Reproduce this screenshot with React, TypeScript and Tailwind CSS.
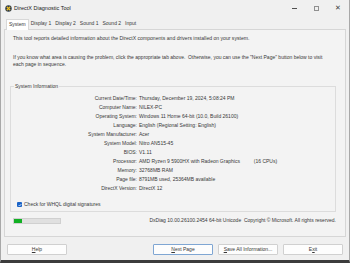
import React from "react";

export default function App() {
  const rows = [
    ["Current Date/Time:", "Thursday, December 19, 2024, 5:08:24 PM"],
    ["Computer Name:", "NILEX-PC"],
    ["Operating System:", "Windows 11 Home 64-bit (10.0, Build 26100)"],
    ["Language:", "English (Regional Setting: English)"],
    ["System Manufacturer:", "Acer"],
    ["System Model:", "Nitro AN515-45"],
    ["BIOS:", "V1.11"],
    ["Processor:", "AMD Ryzen 9 5900HX with Radeon Graphics          (16 CPUs)"],
    ["Memory:", "32768MB RAM"],
    ["Page file:", "8791MB used, 25364MB available"],
    ["DirectX Version:", "DirectX 12"],
  ];

  const tabs = ["System", "Display 1", "Display 2", "Sound 1", "Sound 2", "Input"];

  return (
    <div className="w-[350px] h-[263px] bg-[#f0f0f0] flex flex-col font-['Liberation_Sans',Arial,sans-serif] text-[5px] text-[#383838] border-x border-[#a8a8a8] border-b-[3px] border-b-[#3c3c3c] overflow-hidden">
      {/* Title bar */}
      <div className="h-[17px] flex items-center pl-[4px] shrink-0">
        <svg width="7" height="7" viewBox="0 0 10 10" className="mr-[2px]">
          <circle cx="5" cy="5" r="4.6" fill="#2d3a4a" />
          <path d="M2.5 2.5 L7.5 7.5 M7.5 2.5 L2.5 7.5" stroke="#f0c020" strokeWidth="1.6" />
        </svg>
        <span className="text-[5.5px] text-[#202020]">DirectX Diagnostic Tool</span>
        <div className="ml-auto flex items-center h-full text-[#404040]">
          <div className="w-[22px] flex justify-center">
            <div className="w-[5px] h-px bg-[#505050]" />
          </div>
          <div className="w-[22px] flex justify-center">
            <div className="w-[5px] h-[5px] border border-[#909090]" />
          </div>
          <div className="w-[22px] flex justify-center text-[7px]">✕</div>
        </div>
      </div>

      {/* Tabs */}
      <div className="h-[12px] flex items-end pl-[5px] shrink-0">
        {tabs.map((t, i) => (
          <div
            key={t}
            className={
              i === 0
                ? "h-[11px] px-[2px] flex items-center bg-white border border-b-0 border-[#d8d8d8] relative top-px"
                : "h-[10px] px-[2px] flex items-center"
            }
          >
            {t}
          </div>
        ))}
      </div>

      {/* Panel */}
      <div className="mx-[3px] h-[208px] border border-[#d6d6d6] bg-[#f3f3f3] px-[8px] pt-[5px] flex flex-col shrink-0">
        <p className="leading-[7px] text-[5.1px]">
          This tool reports detailed information about the DirectX components and drivers installed on your system.
        </p>
        <p className="leading-[7px] mt-[12px] pr-[10px]">
          If you know what area is causing the problem, click the appropriate tab above.&nbsp; Otherwise, you can use the "Next Page" button below to visit each page in sequence.
        </p>

        {/* Group box */}
        <div className="mt-[18px] mr-[1px] ml-[-3px] h-[126px] border border-[#dcdcdc] relative">
          <span className="absolute left-[3px] top-[-4px] px-[1px] bg-[#f3f3f3] leading-[7px]">
            System Information
          </span>
          <div className="grid grid-cols-[126px_1fr] gap-x-[2px] pt-[7px]">
            {rows.map(([k, v]) => (
              <React.Fragment key={k}>
                <div className="text-right leading-[9px]">{k}</div>
                <div className="leading-[9px] whitespace-pre">{v}</div>
              </React.Fragment>
            ))}
          </div>
          <div className="flex items-center mt-[8px] ml-[6px]">
            <div className="w-[5px] h-[5px] bg-[#1a63c7] rounded-[1px] flex items-center justify-center mr-[2px]">
              <svg width="4" height="4" viewBox="0 0 4 4">
                <path d="M0.6 2 L1.6 3 L3.4 1" stroke="white" strokeWidth="0.7" fill="none" />
              </svg>
            </div>
            <span className="leading-[7px]">Check for WHQL digital signatures</span>
          </div>
        </div>

        <div className="flex items-center mt-[5px]">
          <div className="w-[48px] h-[6px] bg-[#e0e0e0] border border-[#d0d0d0] flex">
            <div className="w-[8px] h-full bg-[#11b023]" />
          </div>
          <span className="ml-auto mr-[1px] leading-[7px]">
            DxDiag 10.00.26100.2454 64-bit Unicode&nbsp; Copyright © Microsoft. All rights reserved.
          </span>
        </div>
      </div>

      {/* Buttons */}
      <div className="flex items-center px-[6px] mt-[7px] shrink-0">
        <button className="w-[60px] h-[11px] bg-[#fdfdfd] border border-[#d0d0d0] rounded-[1px] text-[5px]">
          <span className="underline">H</span>elp
        </button>
        <button className="ml-auto w-[60px] h-[11px] bg-[#fdfdfd] border border-[#7fa6d3] rounded-[1px] text-[5px]">
          <span className="underline">N</span>ext Page
        </button>
        <button className="ml-[5px] w-[60px] h-[11px] bg-[#fdfdfd] border border-[#d0d0d0] rounded-[1px] text-[5px]">
          <span className="underline">S</span>ave All Information...
        </button>
        <button className="ml-[5px] w-[60px] h-[11px] bg-[#fdfdfd] border border-[#d0d0d0] rounded-[1px] text-[5px]">
          E<span className="underline">x</span>it
        </button>
      </div>
    </div>
  );
}
